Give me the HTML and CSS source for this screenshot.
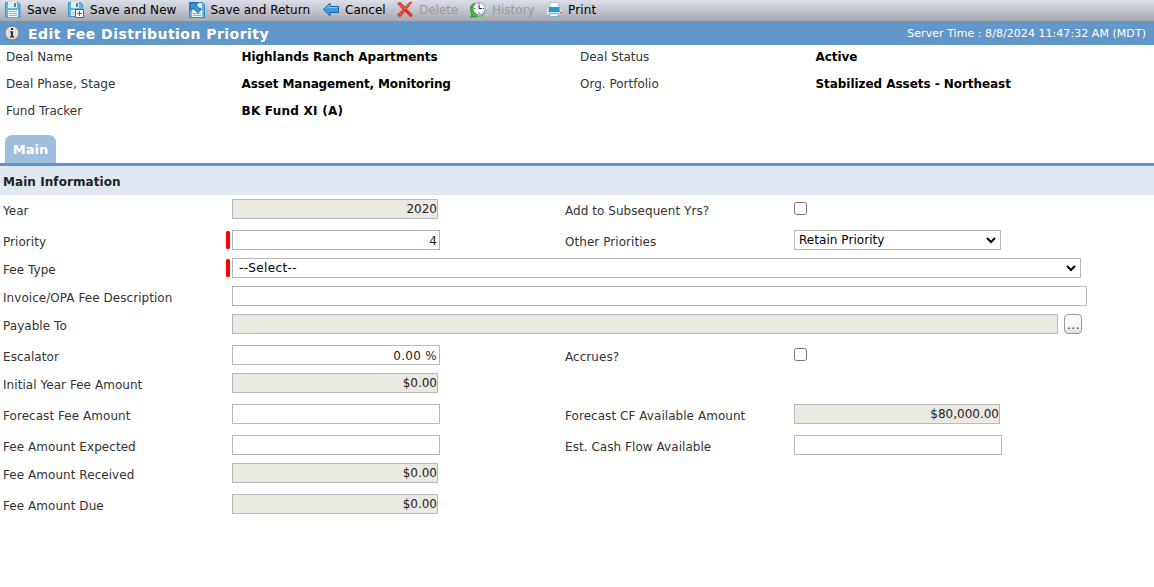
FILE: index.html
```html
<!DOCTYPE html>
<html lang="en">
<head>
<meta charset="utf-8">
<title>Edit Fee Distribution Priority</title>
<link rel="stylesheet" href="styles.css">
</head>
<body>
<nav class="toolbar">
  <a class="tool save"><svg class="icon" viewBox="0 0 16 16"><path d="M.5.5h12.5l2 2v12.5H.5z" fill="#62b4e3" stroke="#4293c6"/><path d="M3 0h9v6H3z" fill="#e5edf3"/><path d="M9 1h2v4H9z" fill="#438cbb"/><path d="M3 8h10v7H3z" fill="#f4f7f9"/><path d="M4 9.5h8M4 11.5h8M4 13.5h8" stroke="#a4b2bc"/></svg>Save</a>
  <a class="tool save-new"><svg class="icon" viewBox="0 0 16 16"><path d="M.5.5h12l2 2v12H.5z" fill="#62b4e3" stroke="#4293c6"/><path d="M3 0h8v6H3z" fill="#e5edf3"/><path d="M8 1h2v4H8z" fill="#438cbb"/><path d="M3 8h9v6H3z" fill="#f4f7f9"/><path d="M4 10.5h4M4 12.5h4" stroke="#a4b2bc"/><path d="M7.5 7.5h8v8h-8z" fill="#fff" stroke="#2f6fa5"/><path d="M11.5 9v5M9 11.5h5" stroke="#219a2c" stroke-width="1.2"/></svg>Save and New</a>
  <a class="tool save-return"><svg class="icon" viewBox="0 0 16 16"><path d="M.5.5h13l2 2v13H.5z" fill="#68b5e5" stroke="#3587bd"/><path d="M8 1h5v5H8z" fill="#dce9f2"/><path d="M3 8h10v7H3z" fill="#edf2f6"/><path d="M4 11.5h8M4 13.5h8" stroke="#9babb7"/><path d="M1 1h8L7 3.2l5 4.6-3.2 3.1-4.6-5L1.5 8.5z" fill="#3199d7" stroke="#1a659a" stroke-width=".8"/></svg>Save and Return</a>
  <a class="tool cancel"><svg class="icon" viewBox="0 0 16 16"><path d="M.5 7.5 7 1.2V4.5h8.5v6H7v3.3z" fill="#3e9dde" stroke="#1765a3"/><path d="M2.5 7 6 3.5v2h8.5" fill="none" stroke="#8bcbf2"/></svg>Cancel</a>
  <a class="tool delete disabled"><svg class="icon" viewBox="0 0 16 16"><path d="M.5 1.5 3 .3l5 4.7L12.5.3H15L9.5 7l6 6-2 2L8 9.3 3 15l-2.5-2L6 7.5z" fill="#ee2d22" stroke="#bd211c" stroke-width=".6"/><path d="m2 1.5 6 5.5L13 1M2.5 13 7.5 8.5" stroke="#ff786d" fill="none"/></svg>Delete</a>
  <a class="tool history disabled"><svg class="icon" viewBox="0 0 16 16"><path d="M5 1C-1 3-1 9 2 12l-1.5 3H7l-1-6-2 1.5C2 8 3 4 5 1z" fill="#43b52d" stroke="#27881f" stroke-width=".7"/><path d="M8 14.5c4 0 6-2 7.3-6" fill="none" stroke="#74b866" stroke-width="1.6"/><circle cx="9.2" cy="6.5" r="5.9" fill="#f9fbfd" stroke="#9bb5c9" stroke-width="1.2"/><path d="M9 3V6.5h3" fill="none" stroke="#222"/><path d="M9.2 1.5v1M9.2 10.5v1M4.2 6.5h1M13 6.5h1" stroke="#333"/></svg>History</a>
  <a class="tool print"><svg class="icon" viewBox="0 0 16 16"><path d="M4 .5h8.5V7H4z" fill="#f6fafc" stroke="#b4c7d4"/><path d="M.5 6h15l.3 2.5V13H.2V8.5z" fill="#dce5ec" stroke="#9daebb" stroke-width=".6"/><path d="M3.2 5h10l.8 5H2.4z" fill="#239ad8"/><path d="M3.5 11.5h9v3h-9z" fill="#eaf6fc" stroke="#79b2d0"/><path d="M14 10h1.5v1.5H14z" fill="#f04b24"/></svg>Print</a>
</nav>
<header class="titlebar">
  <svg class="info" viewBox="0 0 16 16"><circle cx="8" cy="8" r="7" fill="#dedede" stroke="#737b83"/><path d="M7 3h2v2H7zM6 6.3h3V11h1v1.5H6V11h1V7.6H6z" fill="#333"/></svg>
  <h1>Edit Fee Distribution Priority</h1>
  <span class="server">Server Time : 8/8/2024 11:47:32 AM (MDT)</span>
</header>
<dl class="deal">
  <dt>Deal Name</dt><dd>Highlands Ranch Apartments</dd><dt>Deal Status</dt><dd>Active</dd>
  <dt>Deal Phase, Stage</dt><dd class="tight">Asset Management, Monitoring</dd><dt>Org. Portfolio</dt><dd>Stabilized Assets - Northeast</dd>
  <dt>Fund Tracker</dt><dd class="loose">BK Fund XI (A)</dd>
</dl>
<div class="tabs"><a class="tab">Main</a></div>
<h2 class="section">Main Information</h2>
<form class="form">
  <div class="row tall"><label>Year</label><div class="cell"><span class="box readonly">2020</span></div><label>Add to Subsequent Yrs?</label><div class="cell"><span class="check"></span></div></div>
  <div class="row"><label>Priority</label><div class="cell required"><span class="box input">4</span></div><label>Other Priorities</label><div class="cell"><span class="box select">Retain Priority<svg class="chevron" viewBox="0 0 10 7"><path d="m1 1 4 4 4-4" /></svg></span></div></div>
  <div class="row"><label>Fee Type</label><div class="cell wide required"><span class="box select fee">--Select--<svg class="chevron" viewBox="0 0 10 7"><path d="m1 1 4 4 4-4" /></svg></span></div></div>
  <div class="row"><label>Invoice/OPA Fee Description</label><div class="cell wide"><span class="box input description"></span></div></div>
  <div class="row tall"><label>Payable To</label><div class="cell wide"><span class="box readonly payable"></span><span class="browse">...</span></div></div>
  <div class="row"><label>Escalator</label><div class="cell"><span class="box input percent">0.00 %</span></div><label>Accrues?</label><div class="cell"><span class="check"></span></div></div>
  <div class="row tall"><label>Initial Year Fee Amount</label><div class="cell"><span class="box readonly">$0.00</span></div></div>
  <div class="row tall"><label>Forecast Fee Amount</label><div class="cell"><span class="box input"></span></div><label>Forecast CF Available Amount</label><div class="cell"><span class="box readonly">$80,000.00</span></div></div>
  <div class="row"><label>Fee Amount Expected</label><div class="cell"><span class="box input"></span></div><label>Est. Cash Flow Available</label><div class="cell"><span class="box input"></span></div></div>
  <div class="row tall"><label>Fee Amount Received</label><div class="cell"><span class="box readonly">$0.00</span></div></div>
  <div class="row"><label>Fee Amount Due</label><div class="cell"><span class="box readonly">$0.00</span></div></div>
</form>
</body>
</html>
```
FILE: styles.css
```css
* { box-sizing: border-box; }
body { margin: 0; background: #fff; color: #333; font: 12px/16px Verdana, "DejaVu Sans", sans-serif; overflow: hidden; }
h1, h2, dl, dd { margin: 0; }

.toolbar { display: flex; height: 21px; padding-left: 5px; background: linear-gradient(#dcdfe8, #a6a9b0); color: #000; }
.tool { display: flex; align-items: center; gap: 6px; height: 20px; white-space: nowrap; }
.icon { width: 16px; height: 16px; flex: none; margin-top: -1px; }
.save { width: 63px; }
.save-new { width: 121px; letter-spacing: .05px; }
.save-return { width: 134px; gap: 5.5px; }
.cancel { width: 74px; }
.delete { width: 73px; }
.history { width: 76px; }
.print { letter-spacing: .15px; }
.disabled { color: #999; }

.titlebar { display: flex; align-items: center; height: 24px; padding: 0 8px 0 4px; background: #6297ca; color: #fff; }
.info { width: 16px; height: 16px; margin-right: 8px; }
h1 { padding-top: 2px; font-size: 14px; line-height: 20px; letter-spacing: .47px; }
.server { margin-left: auto; padding-top: 1px; font-size: 11px; letter-spacing: .05px; }

.deal { display: grid; grid-template-columns: 235.5px 338.5px 235.5px 1fr; grid-auto-rows: 27px; height: 90px; padding: 4px 0 0 6px; }
.deal dd { color: #000; font-weight: bold; letter-spacing: -.05px; }
.deal .tight { letter-spacing: -.12px; }
.deal .loose { letter-spacing: .25px; }

.tabs { height: 31px; padding-left: 5px; border-bottom: 3px solid #6297ca; }
.tab { display: block; width: 51px; height: 28px; border-radius: 7px 7px 0 0; background: #9fbddd; color: #fff; font-size: 13px; font-weight: bold; line-height: 29px; text-align: center; }
.section { height: 29px; padding-left: 3px; background: #e0e8f2; color: #222; font-size: 12px; line-height: 32px; letter-spacing: .07px; }

.row { display: grid; grid-template-columns: 229px 333px 229px 1fr; height: 28px; padding-left: 3px; }
.tall { height: 31px; }
.row label { padding-top: 8px; letter-spacing: .05px; }
.cell { display: flex; align-items: flex-start; padding-top: 4px; }
.wide { grid-column: 2 / -1; }
.box { display: block; width: 208px; height: 20px; border: 1px solid #b8b8b8; line-height: 20px; text-align: right; color: #222; }
.input { padding-right: 2px; }
.readonly { width: 206px; background: #eaeae2; line-height: 18px; }
.select { display: flex; align-items: center; justify-content: space-between; width: 207px; padding: 0 4px; color: #000; letter-spacing: .05px; }
.chevron { width: 10px; height: 7px; fill: none; stroke: #000; stroke-width: 2; }
.fee { width: 849px; padding-left: 6px; letter-spacing: .35px; }
.description { width: 855px; }
.payable { width: 826px; }
.percent { letter-spacing: .3px; }
.required::before { content: ""; width: 4px; height: 18px; margin: 1px 2px 0 -6px; border-radius: 1.5px; background: #f00; }
.check { width: 13px; height: 13px; margin-top: 3px; border: 1px solid #767676; border-radius: 2.5px; }
.browse { width: 18px; height: 20px; margin-left: 6px; padding-left: 1px; border: 1px solid #999; border-radius: 4px; background: linear-gradient(#fafafa 55%, #e0e0e0); color: #333; line-height: 20px; text-align: center; letter-spacing: .5px; }
```
